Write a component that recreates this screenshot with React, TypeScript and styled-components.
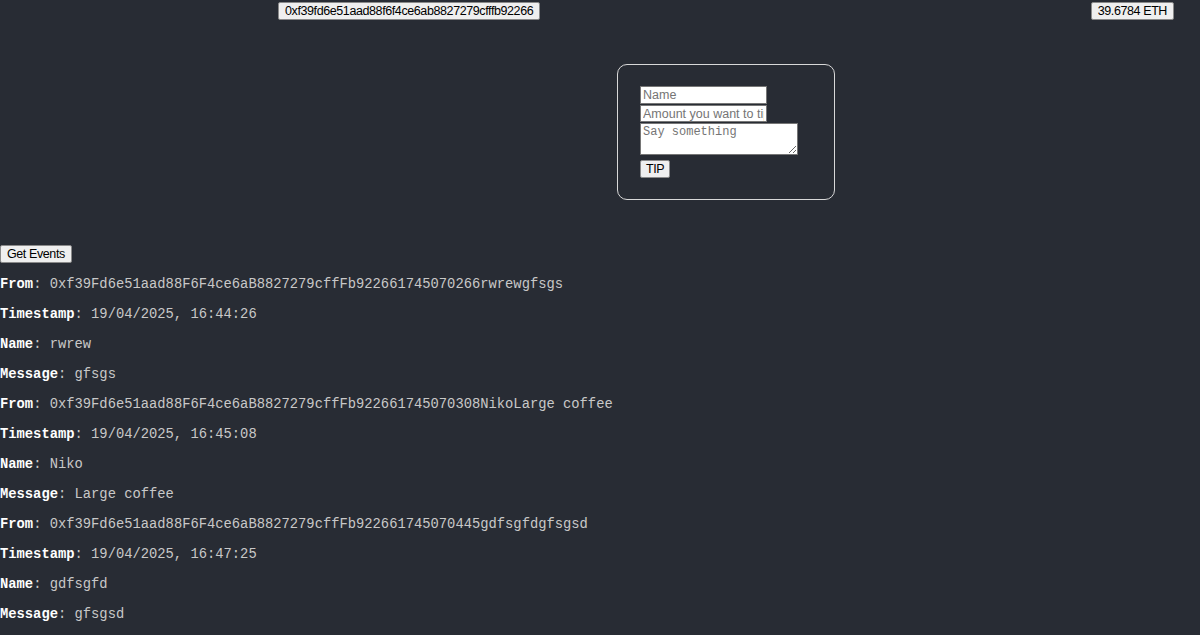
import styled, { createGlobalStyle } from "styled-components";

const events = [
  {
    from: "0xf39Fd6e51aad88F6F4ce6aB8827279cffFb92266",
    ts: "1745070266",
    time: "19/04/2025, 16:44:26",
    name: "rwrew",
    message: "gfsgs",
  },
  {
    from: "0xf39Fd6e51aad88F6F4ce6aB8827279cffFb92266",
    ts: "1745070308",
    time: "19/04/2025, 16:45:08",
    name: "Niko",
    message: "Large coffee",
  },
  {
    from: "0xf39Fd6e51aad88F6F4ce6aB8827279cffFb92266",
    ts: "1745070445",
    time: "19/04/2025, 16:47:25",
    name: "gdfsgfd",
    message: "gfsgsd",
  },
];

export default function App() {
  return (
    <>
      <GlobalStyle />
      <Page>
        <Header>
          <Button $ml={278}>0xf39fd6e51aad88f6f4ce6ab8827279cfffb92266</Button>
          <Button $mr={26}>39.6784 ETH</Button>
        </Header>
        <CardRow>
          <Card>
            <Input placeholder="Name" />
            <Input placeholder="Amount you want to tip" />
            <TextArea placeholder="Say something" />
            <TipButton>TIP</TipButton>
          </Card>
        </CardRow>
        <Button>Get Events</Button>
        <Events>
          {events.map((e, i) => (
            <div key={i}>
              <Line>
                <Label>From</Label>: {e.from}
                {e.ts}
                {e.name}
                {e.message}
              </Line>
              <Line>
                <Label>Timestamp</Label>: {e.time}
              </Line>
              <Line>
                <Label>Name</Label>: {e.name}
              </Line>
              <Line>
                <Label>Message</Label>: {e.message}
              </Line>
            </div>
          ))}
        </Events>
      </Page>
    </>
  );
}

const GlobalStyle = createGlobalStyle`
  html, body {
    margin: 0;
    padding: 0;
    background: #282c34;
  }
  body {
    font-family: "Liberation Sans", Arial, sans-serif;
    overflow: hidden;
  }
`;

const Page = styled.div`
  min-height: 635px;
  background: #282c34;
`;

const Header = styled.div`
  display: flex;
  justify-content: space-between;
  align-items: flex-start;
  padding-top: 2px;
`;

const Button = styled.button<{ $ml?: number; $mr?: number }>`
  font-family: "Liberation Sans", Arial, sans-serif;
  font-size: 12.5px;
  letter-spacing: -0.4px;
  line-height: 16px;
  color: #000;
  background: #efefef;
  border: 1px solid #8a8a8a;
  border-radius: 2px;
  padding: 0 6px;
  height: 18px;
  margin-left: ${({ $ml }) => ($ml ? `${$ml}px` : "0")};
  margin-right: ${({ $mr }) => ($mr ? `${$mr}px` : "0")};
`;

const CardRow = styled.div`
  display: flex;
  padding: 44px 0 44px 617px;
`;

const Card = styled.div`
  width: 218px;
  height: 136px;
  box-sizing: border-box;
  border: 1px solid #d8d8d8;
  border-radius: 10px;
  padding: 21px 22px;
  display: flex;
  flex-direction: column;
  align-items: flex-start;
`;

const Input = styled.input`
  width: 127px;
  height: 18px;
  box-sizing: border-box;
  font-family: "Liberation Sans", Arial, sans-serif;
  font-size: 12.5px;
  padding: 0 2px;
  border: 1px solid #767676;
  background: #fff;
  margin: 0 0 1px;
  &::placeholder {
    color: #757575;
  }
`;

const TextArea = styled.textarea`
  width: 158px;
  height: 32px;
  box-sizing: border-box;
  font-family: "Courier New", "Liberation Mono", monospace;
  font-size: 12px;
  padding: 1px 2px;
  border: 1px solid #767676;
  background: #fff;
  margin: 0;
  &::placeholder {
    color: #757575;
  }
`;

const TipButton = styled(Button)`
  margin-top: 5px;
  padding: 0 5px;
`;

const Events = styled.div`
  font-family: "Courier New", "Liberation Mono", monospace;
  font-size: 13.8px;
  color: #c8c8c8;
`;

const Line = styled.p`
  margin: 14px 0;
  line-height: 16px;
  white-space: nowrap;
`;

const Label = styled.strong`
  color: #fff;
  font-weight: bold;
`;
